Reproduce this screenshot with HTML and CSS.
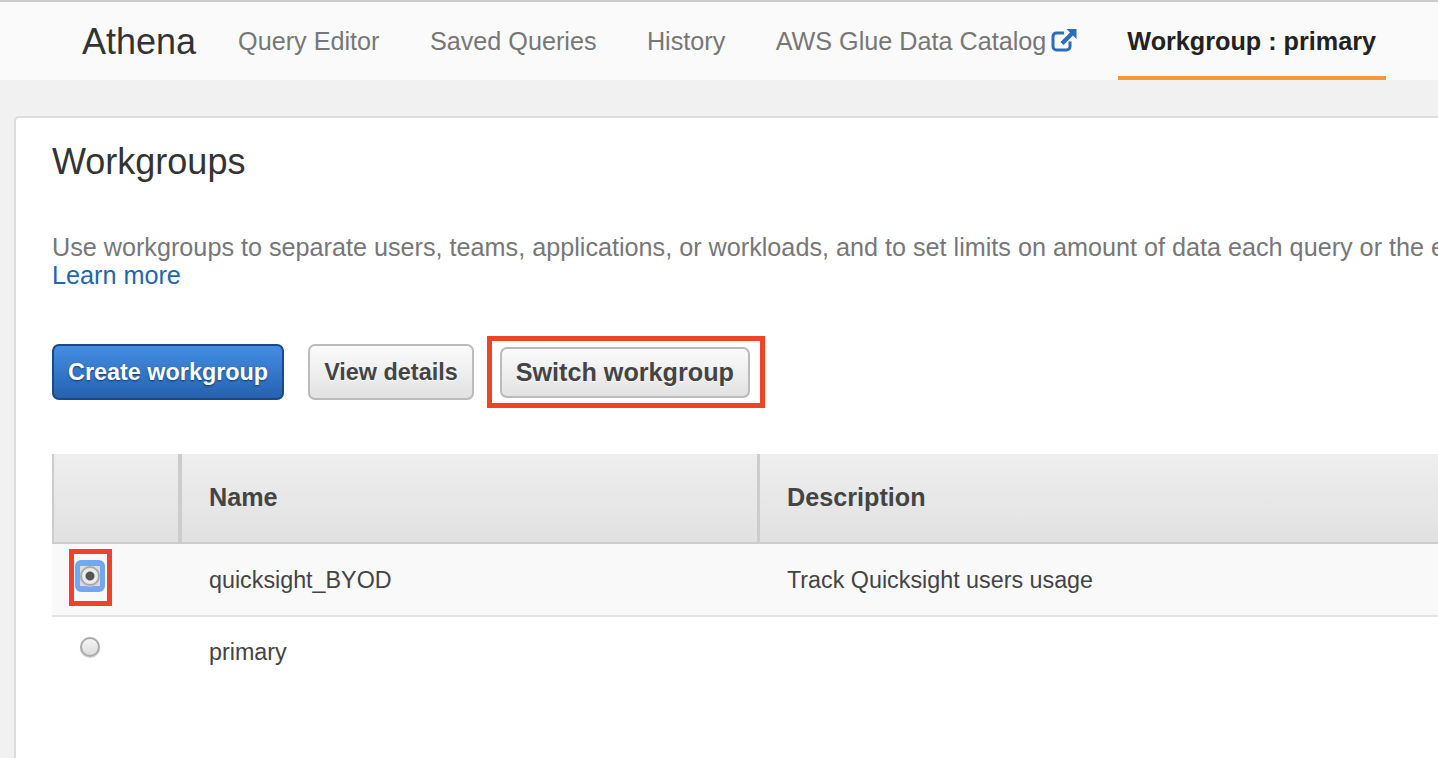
FILE: index.html
```html
<!DOCTYPE html>
<html lang="en">
<head>
  <meta charset="UTF-8" />
  <title>Athena</title>
  <link rel="stylesheet" href="styles.css">
</head>
<body>
  <nav class="topnav">
    <div class="brand">Athena</div>
    <a class="nav-item" href="#">Query Editor</a>
    <a class="nav-item" href="#">Saved Queries</a>
    <a class="nav-item" href="#">History</a>
    <a class="nav-item nav-external" href="#">AWS Glue Data Catalog
      <svg class="external-icon" viewBox="0 0 26 24" width="26" height="24">
        <path d="M19 13.5v5a3.5 3.5 0 0 1-3.5 3.5H5.500A3.500 3.500 0 0 1 2 18.500V8.500A3.500 3.500 0 0 1 5.500 5H13" fill="none" stroke="#2a6ebb" stroke-width="3"/>
        <path d="M15.500 1H25.500V11L22 7.500L12.500 17L9.500 14L19 4.500Z" fill="#2a6ebb"/>
      </svg>
    </a>
    <a class="nav-item nav-active" href="#">Workgroup : primary</a>
  </nav>

  <main class="card">
    <h1>Workgroups</h1>
    <p class="intro">Use workgroups to separate users, teams, applications, or workloads, and to set limits on amount of data each query or the entire workgroup can process<br><a href="#">Learn more</a></p>

    <div class="actions">
      <button class="btn btn-primary">Create workgroup</button>
      <button class="btn btn-details">View details</button>
      <button class="btn btn-switch">Switch workgroup</button>
    </div>

    <div class="table">
      <div class="row head">
        <div class="cell cell-check"></div>
        <div class="cell cell-name">Name</div>
        <div class="cell cell-desc">Description</div>
      </div>
      <div class="row selected">
        <div class="cell cell-check"><span class="focus-ring"><span class="radio radio-on"></span></span></div>
        <div class="cell cell-name">quicksight_BYOD</div>
        <div class="cell cell-desc">Track Quicksight users usage</div>
      </div>
      <div class="row">
        <div class="cell cell-check"><span class="radio"></span></div>
        <div class="cell cell-name">primary</div>
        <div class="cell cell-desc"></div>
      </div>
    </div>
  </main>

  <!-- red annotation boxes -->
  <div class="mark mark-switch"></div>
  <div class="mark mark-radio"></div>
</body>
</html>
```

FILE: styles.css
```css
html, body {
  margin: 0;
  padding: 0;
  height: 100%;
  overflow: hidden;
}
body {
  background: #f1f1f1;
  font-family: "Liberation Sans", Arial, sans-serif;
  position: relative;
  color: #444;
}
.topnav {
  display: flex;
  align-items: stretch;
  height: 78px;
  border-top: 2px solid #ccc;
  background: #fafafa;
  padding-left: 82px;
  white-space: nowrap;
}
.brand {
  font-size: 36px;
  color: #333;
  line-height: 80px;
  margin-right: 42px;
}
.nav-item {
  font-size: 25.2px;
  color: #777;
  text-decoration: none;
  line-height: 78px;
  margin-right: 50.4px;
  box-sizing: border-box;
}
.nav-external {
  display: flex;
  align-items: center;
  gap: 5px;
  margin-right: 41px;
}
.external-icon {
  margin-top: -2px;
}
.nav-active {
  margin: 0;
  width: 268px;
  padding-left: 9px;
  color: #222;
  font-weight: bold;
  border-bottom: 4px solid #f49b36;
}
.card {
  margin: 36px 0 0 14px;
  height: 642px;
  box-sizing: border-box;
  background: #fff;
  border: 2px solid #ddd;
  border-right: 0;
  border-bottom: 0;
  border-top-left-radius: 5px;
  padding: 0 0 0 36px;
  overflow: hidden;
}
h1 {
  margin: 25px 0 0 0;
  font-size: 36px;
  font-weight: normal;
  line-height: 38px;
  color: #333;
}
.intro {
  margin: 52px 0 0 0;
  font-size: 25.2px;
  line-height: 28px;
  color: #777;
  white-space: nowrap;
}
.intro a {
  color: #1d66b0;
  text-decoration: none;
}
.actions {
  display: flex;
  align-items: flex-start;
  margin-top: 55px;
}
.btn {
  height: 56px;
  padding: 0 14px;
  margin-right: 24px;
  border: 2px solid #bbb;
  border-radius: 7px;
  background: linear-gradient(#fbfbfb, #e2e2e2);
  color: #444;
  font-family: inherit;
  font-size: 23.4px;
  font-weight: bold;
  text-shadow: 0 1px 1px #fff;
  white-space: nowrap;
}
.btn-primary {
  background: linear-gradient(#438ee4, #2662ae);
  border-color: #1a4a85;
  color: #fff;
  text-shadow: 0 1px 2px #12386c;
}
.btn-details {
  margin-right: 26px;
}
.btn-switch {
  height: 51px;
  margin: 3px 0 0 0;
  padding-bottom: 1px;
  font-size: 25.2px;
}
.table {
  margin-top: 54px;
  font-size: 23.3px;
  color: #444;
}
.row {
  display: flex;
  height: 70px;
  background: #fff;
  border-bottom: 2px solid #e4e4e4;
  align-items: center;
}
.row:last-child {
  border-bottom: 0;
}
.row.selected {
  height: 73px;
  padding-top: 2px;
  box-sizing: border-box;
  background: #f9f9f9;
}
.row.head {
  height: 88px;
  background: linear-gradient(#eeeeee, #e1e1e1);
  border-bottom: 2px solid #ccc;
  font-size: 25.2px;
  font-weight: bold;
  align-items: stretch;
}
.head .cell {
  padding-bottom: 2px;
}
.cell {
  box-sizing: border-box;
  display: flex;
  align-items: center;
  white-space: nowrap;
}
.cell-check {
  width: 130px;
  padding-left: 28px;
  padding-bottom: 10px;
}
.cell-name {
  width: 578px;
  padding-left: 27px;
}
.cell-desc {
  padding-left: 27px;
  flex: 1;
}
.head .cell-check {
  border-left: 2px solid #ccc;
  border-right: 4px solid #ccc;
}
.head .cell-name {
  border-right: 3px solid #ccc;
}
.radio {
  display: block;
  width: 20px;
  height: 20px;
  box-sizing: border-box;
  border-radius: 50%;
  border: 2px solid #aaa;
  background: linear-gradient(#f4f4f4, #dcdcdc);
  box-shadow: 0 1px 1px #ccc;
}
.radio-on {
  background: radial-gradient(circle, #555 0 4px, #ececec 5px);
}
.focus-ring {
  display: block;
  margin-left: -5px;
  background: #dcdcdc;
  border-style: solid;
  border-color: #74a6f3;
  border-width: 6px 5px;
  border-radius: 6px;
}
.mark {
  position: absolute;
  box-sizing: border-box;
  border: 5px solid #ee4324;
}
.mark-switch {
  left: 487px;
  top: 336px;
  width: 278px;
  height: 72px;
}
.mark-radio {
  left: 69px;
  top: 549px;
  width: 43px;
  height: 57px;
}
```
